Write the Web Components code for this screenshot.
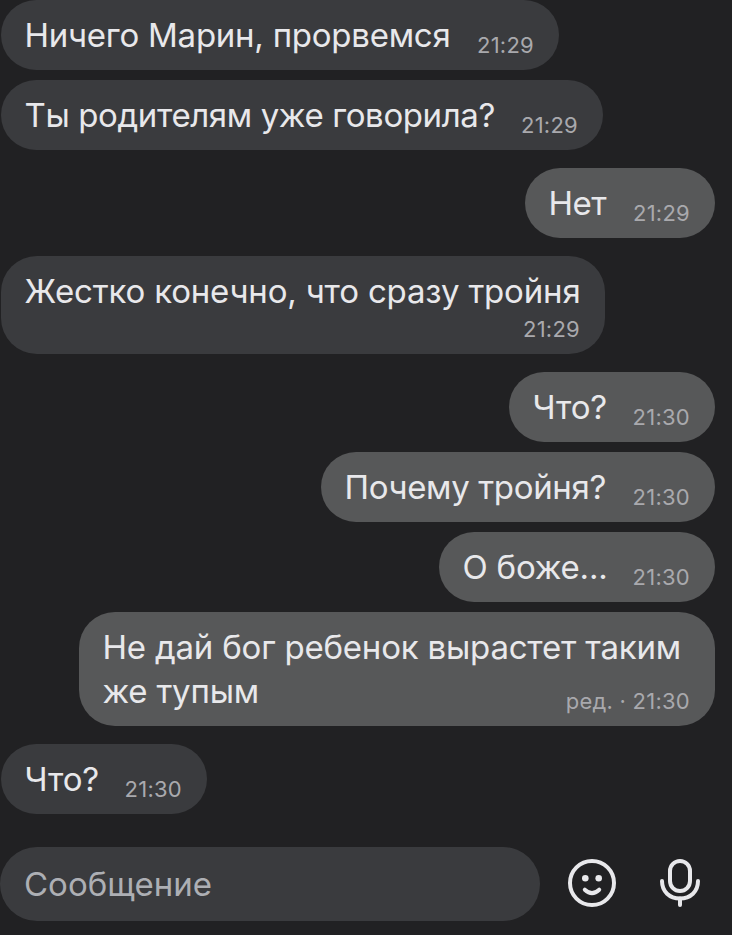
<!DOCTYPE html>
<html lang="ru">
<head>
<meta charset="UTF-8">
<title>Чат</title>
<style>
  html, body {
    margin: 0;
    height: 100%;
    background: #212123;
    overflow: hidden;
  }
  body {
    font-family: Inter, Roboto, "Liberation Sans", sans-serif;
    color: #e8e8eb;
  }
</style>
</head>
<body>
<chat-screen>
  <chat-message width="558" text-width="426" time="21:29">Ничего Марин, прорвемся</chat-message>
  <chat-message width="602" text-width="470.5" time="21:29">Ты родителям уже говорила?</chat-message>
  <chat-message own first width="190" text-width="57.5" time="21:29">Нет</chat-message>
  <chat-message first stacked width="604" text-width="556" time="21:29">Жестко конечно, что сразу тройня</chat-message>
  <chat-message own first width="206" text-width="74.5" time="21:30">Что?</chat-message>
  <chat-message own width="394" text-width="261.5" time="21:30">Почему тройня?</chat-message>
  <chat-message own width="276" text-width="145" time="21:30">О боже...</chat-message>
  <chat-message own multiline width="636" text-width="578.5" time="ред. · 21:30">Не дай бог ребенок вырастет таким<br>же тупым</chat-message>
  <chat-message first width="206" text-width="74.5" time="21:30">Что?</chat-message>
  <message-input slot="footer" placeholder="Сообщение"></message-input>
</chat-screen>

<script>
class ChatScreen extends HTMLElement {
  constructor() {
    super();
    this.attachShadow({ mode: 'open' });
    this.shadowRoot.innerHTML = `
      <style>
        :host {
          display: flex;
          flex-direction: column;
          justify-content: space-between;
          box-sizing: border-box;
          width: 732px;
          height: 935px;
          padding-bottom: 14px;
        }
        .messages {
          display: flex;
          flex-direction: column;
          align-items: flex-start;
          gap: 10px;
          padding: 0 17px 0 1px;
        }
      </style>
      <div class="messages"><slot></slot></div>
      <slot name="footer"></slot>
    `;
  }
}

class ChatMessage extends HTMLElement {
  constructor() {
    super();
    this.attachShadow({ mode: 'open' });
  }

  connectedCallback() {
    this.render();
    this.fitText();
  }

  render() {
    this.shadowRoot.innerHTML = `
      <style>
        :host {
          display: flex;
          justify-content: space-between;
          align-items: flex-end;
          box-sizing: border-box;
          width: ${this.getAttribute('width')}px;
          min-height: 70px;
          padding: 13px 25px 12px 23.5px;
          border-radius: 36px;
          background: #3a3b3e;
        }
        :host([own]) {
          align-self: flex-end;
          background: #575859;
        }
        :host([first]) {
          margin-top: 8px;
        }
        :host([stacked]) {
          flex-direction: column;
          justify-content: space-between;
          height: 98px;
        }
        :host([multiline]) {
          height: 114px;
        }
        .text {
          align-self: flex-start;
          font-size: 33px;
          line-height: 44px;
          white-space: nowrap;
        }
        :host([multiline]) .text {
          width: 0;
        }
        .time {
          color: #a9a9ad;
          font-size: 22px;
          line-height: 26px;
          letter-spacing: 0.25px;
          white-space: nowrap;
        }
      </style>
      <div class="text"><span><slot></slot></span></div>
      <div class="time">${this.getAttribute('time')}</div>
    `;
  }

  // spread the letters so that the longest line takes text-width
  fitText() {
    const span = this.shadowRoot.querySelector('span');
    const target = Number(this.getAttribute('text-width'));
    const line = this.firstChild.textContent;
    const natural = span.getBoundingClientRect().width;
    span.style.letterSpacing = `${(target - natural) / line.length}px`;
  }
}

class MessageInput extends HTMLElement {
  constructor() {
    super();
    this.attachShadow({ mode: 'open' });
  }

  connectedCallback() {
    this.shadowRoot.innerHTML = `
      <style>
        :host {
          display: flex;
          align-items: center;
          height: 74px;
        }
        .field {
          flex: none;
          box-sizing: border-box;
          width: 540px;
          height: 74px;
          padding-left: 24px;
          border-radius: 37px;
          background: #3a3b3e;
          color: #adafb4;
          font-size: 33px;
          line-height: 74px;
          letter-spacing: 0;
        }
        svg {
          flex: none;
          display: block;
          fill: none;
          stroke: #e8e8eb;
          stroke-width: 4;
          stroke-linecap: round;
        }
        .smile {
          margin: -2px 0 0 26px;
        }
        .mic {
          margin: -2px 0 0 36px;
        }
        .dot {
          fill: #e8e8eb;
          stroke: none;
        }
      </style>
      <div class="field">${this.getAttribute('placeholder')}</div>
      <svg class="smile" width="52" height="52" viewBox="0 0 52 52">
        <circle cx="26" cy="26" r="22"/>
        <circle class="dot" cx="19.3" cy="21.3" r="3.3"/>
        <circle class="dot" cx="32.7" cy="21.3" r="3.3"/>
        <path d="M18.8 32.7 Q26 39.6 33.2 32.7"/>
      </svg>
      <svg class="mic" width="52" height="52" viewBox="0 0 52 52">
        <rect x="16" y="4" width="20" height="30" rx="10"/>
        <path d="M8 24 C8 34.5 15.5 41.5 26 41.5 C36.5 41.5 44 34.5 44 24"/>
        <path d="M26 41.5 V48"/>
      </svg>
    `;
  }
}

customElements.define('chat-screen', ChatScreen);
customElements.define('chat-message', ChatMessage);
customElements.define('message-input', MessageInput);
</script>
</body>
</html>
